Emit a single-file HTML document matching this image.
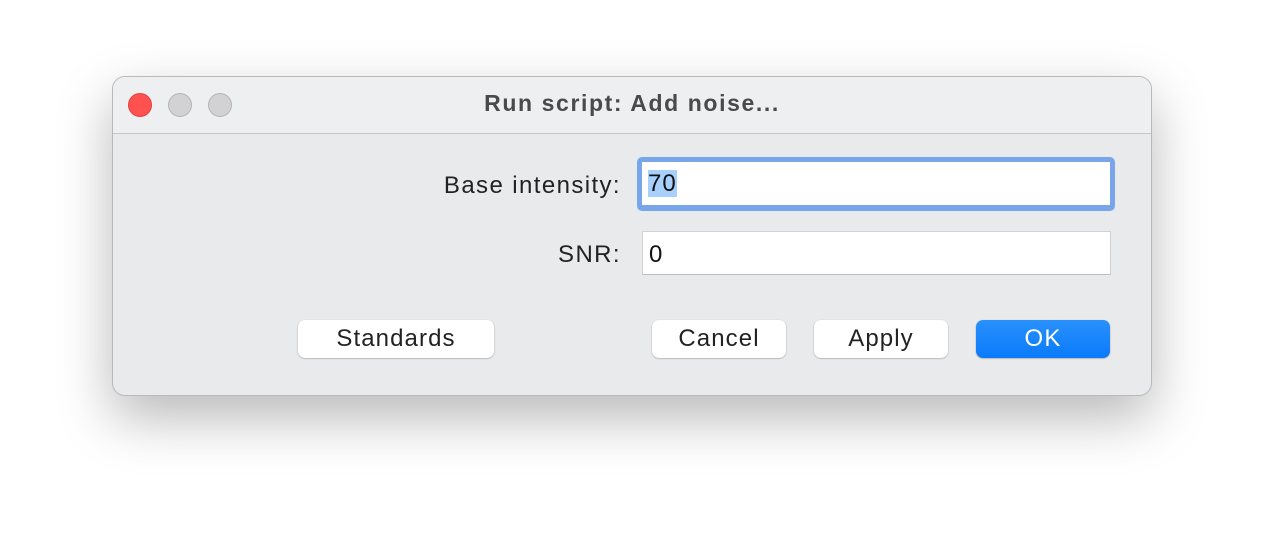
<!DOCTYPE html>
<html><head><style>
body{margin:0;width:1264px;height:544px;background:#fff;position:relative;overflow:hidden;font-family:"Liberation Sans",sans-serif;}
.win{position:absolute;left:112px;top:76px;width:1038px;height:318px;border:1px solid #b9b9bb;border-radius:13px;background:#e9eaec;box-shadow:0 22px 55px rgba(0,0,0,0.28);overflow:hidden}
.tb{position:absolute;left:0;top:0;right:0;height:56px;background:#eeeff1;border-bottom:1px solid #c6c6c8}
.dot{position:absolute;top:16px;width:22px;height:22px;border-radius:50%;background:#d2d2d4;border:1px solid #b5b5b7}
.title{position:absolute;left:0;right:0;top:13px;text-align:center;font-weight:bold;font-size:23px;letter-spacing:1.6px;color:#4a4a4a}
.lbl{position:absolute;font-size:24px;letter-spacing:1.4px;color:#222;text-align:right;width:300px}
.fld{position:absolute;background:#fff;border:1px solid #d2d2d4;font-size:24px;letter-spacing:1px;color:#111;box-sizing:border-box;padding-left:6px}
.btn{position:absolute;top:243px;height:38px;background:#fff;border-radius:7px;box-shadow:0 0.5px 1.5px rgba(0,0,0,0.35);font-size:24px;letter-spacing:1.1px;color:#222;text-align:center;line-height:37px}
</style></head><body>
<div class="win">
 <div class="tb">
  <div class="dot" style="left:15px;background:#fe5150;border-color:#e1403e"></div>
  <div class="dot" style="left:55px"></div>
  <div class="dot" style="left:95px"></div>
  <div class="title">Run script: Add noise...</div>
 </div>
 <div class="lbl" style="left:208px;top:95px">Base intensity:</div>
 <div style="position:absolute;left:524px;top:80px;width:478px;height:54px;border-radius:5px;background:#79a6ea"></div>
 <div class="fld" style="left:529px;top:85px;width:468px;height:43px;border:none;line-height:44px"><span style="background:#a8d0fd">70</span></div>
 <div class="lbl" style="left:208px;top:164px">SNR:</div>
 <div class="fld" style="left:529px;top:154px;width:469px;height:44px;line-height:46px;border-bottom-color:#bfbfc1">0</div>
 <div class="btn" style="left:185px;width:196px">Standards</div>
 <div class="btn" style="left:539px;width:134px">Cancel</div>
 <div class="btn" style="left:701px;width:134px">Apply</div>
 <div class="btn" style="left:863px;width:134px;background:linear-gradient(#2991fc,#0a7afa);color:#fff">OK</div>
</div>
</body></html>
